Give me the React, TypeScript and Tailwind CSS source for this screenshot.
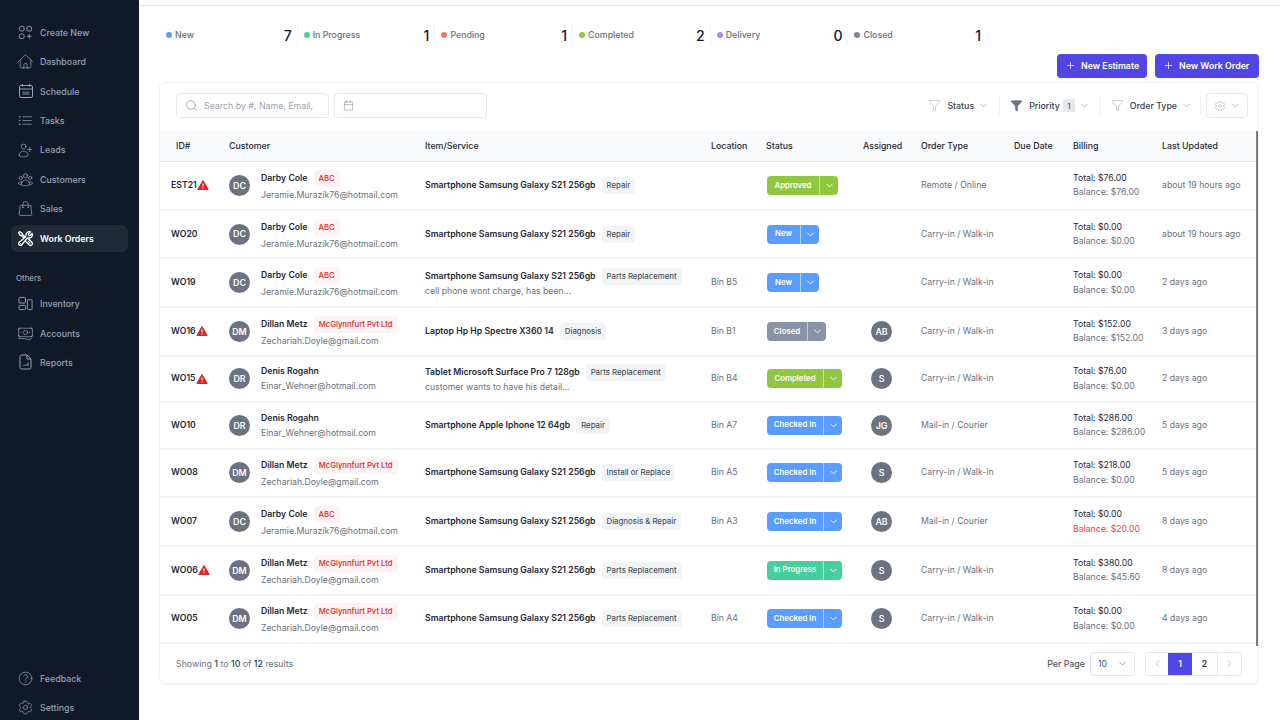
import { ChevronDown, ChevronLeft, ChevronRight, Plus, Search, Calendar, Filter, Settings } from "lucide-react";
import {
  HiOutlineHome,
  HiOutlineListBullet,
  HiOutlineUserPlus,
  HiOutlineUserGroup,
  HiOutlineShoppingBag,
  HiOutlineWrenchScrewdriver,
  HiOutlineBanknotes,
  HiOutlineQuestionMarkCircle,
  HiOutlineCog6Tooth,
} from "react-icons/hi2";
import type { ReactNode } from "react";

type Row = {
  id: string;
  alert?: boolean;
  initials: string;
  name: string;
  org?: string;
  email: string;
  item: string;
  tag: string;
  note?: string;
  location?: string;
  status: string;
  assigned?: string;
  orderType: string;
  total: string;
  balance: string;
  balanceRed?: boolean;
  updated: string;
};

const rows: Row[] = [
  { id: "EST21", alert: true, initials: "DC", name: "Darby Cole", org: "ABC", email: "Jeramie.Murazik76@hotmail.com", item: "Smartphone Samsung Galaxy S21 256gb", tag: "Repair", status: "Approved", orderType: "Remote / Online", total: "$76.00", balance: "$76.00", updated: "about 19 hours ago" },
  { id: "WO20", initials: "DC", name: "Darby Cole", org: "ABC", email: "Jeramie.Murazik76@hotmail.com", item: "Smartphone Samsung Galaxy S21 256gb", tag: "Repair", status: "New", orderType: "Carry-in / Walk-in", total: "$0.00", balance: "$0.00", updated: "about 19 hours ago" },
  { id: "WO19", initials: "DC", name: "Darby Cole", org: "ABC", email: "Jeramie.Murazik76@hotmail.com", item: "Smartphone Samsung Galaxy S21 256gb", tag: "Parts Replacement", note: "cell phone wont charge, has been...", location: "Bin B5", status: "New", orderType: "Carry-in / Walk-in", total: "$0.00", balance: "$0.00", updated: "2 days ago" },
  { id: "WO16", alert: true, initials: "DM", name: "Dillan Metz", org: "McGlynnfurt Pvt Ltd", email: "Zechariah.Doyle@gmail.com", item: "Laptop Hp Hp Spectre X360 14", tag: "Diagnosis", location: "Bin B1", status: "Closed", assigned: "AB", orderType: "Carry-in / Walk-in", total: "$152.00", balance: "$152.00", updated: "3 days ago" },
  { id: "WO15", alert: true, initials: "DR", name: "Denis Rogahn", email: "Einar_Wehner@hotmail.com", item: "Tablet Microsoft Surface Pro 7 128gb", tag: "Parts Replacement", note: "customer wants to have his detail...", location: "Bin B4", status: "Completed", assigned: "S", orderType: "Carry-in / Walk-in", total: "$76.00", balance: "$0.00", updated: "2 days ago" },
  { id: "WO10", initials: "DR", name: "Denis Rogahn", email: "Einar_Wehner@hotmail.com", item: "Smartphone Apple Iphone 12 64gb", tag: "Repair", location: "Bin A7", status: "Checked In", assigned: "JG", orderType: "Mail-in / Courier", total: "$286.00", balance: "$286.00", updated: "5 days ago" },
  { id: "WO08", initials: "DM", name: "Dillan Metz", org: "McGlynnfurt Pvt Ltd", email: "Zechariah.Doyle@gmail.com", item: "Smartphone Samsung Galaxy S21 256gb", tag: "Install or Replace", location: "Bin A5", status: "Checked In", assigned: "S", orderType: "Carry-in / Walk-in", total: "$218.00", balance: "$0.00", updated: "5 days ago" },
  { id: "WO07", initials: "DC", name: "Darby Cole", org: "ABC", email: "Jeramie.Murazik76@hotmail.com", item: "Smartphone Samsung Galaxy S21 256gb", tag: "Diagnosis & Repair", location: "Bin A3", status: "Checked In", assigned: "AB", orderType: "Mail-in / Courier", total: "$0.00", balance: "$20.00", balanceRed: true, updated: "8 days ago" },
  { id: "WO06", alert: true, initials: "DM", name: "Dillan Metz", org: "McGlynnfurt Pvt Ltd", email: "Zechariah.Doyle@gmail.com", item: "Smartphone Samsung Galaxy S21 256gb", tag: "Parts Replacement", status: "In Progress", assigned: "S", orderType: "Carry-in / Walk-in", total: "$380.00", balance: "$45.60", updated: "8 days ago" },
  { id: "WO05", initials: "DM", name: "Dillan Metz", org: "McGlynnfurt Pvt Ltd", email: "Zechariah.Doyle@gmail.com", item: "Smartphone Samsung Galaxy S21 256gb", tag: "Parts Replacement", location: "Bin A4", status: "Checked In", assigned: "S", orderType: "Carry-in / Walk-in", total: "$0.00", balance: "$0.00", updated: "4 days ago" },
];

const statusStyles: Record<string, { className: string; width: string }> = {
  Approved: { className: "bg-[#8fc740]", width: "w-[52px]" },
  New: { className: "bg-[#5b9dff]", width: "w-[33px]" },
  Closed: { className: "bg-[#8893a5]", width: "w-[40px]" },
  Completed: { className: "bg-[#8fc740]", width: "w-[56px]" },
  "Checked In": { className: "bg-[#5b9dff]", width: "w-[56px]" },
  "In Progress": { className: "bg-[#45cf9b]", width: "w-[56px]" },
};

const stats = [
  { label: "New", count: 7, dot: "bg-[#5b9dff]" },
  { label: "In Progress", count: 1, dot: "bg-[#45cf9b]" },
  { label: "Pending", count: 1, dot: "bg-[#f87060]" },
  { label: "Completed", count: 2, dot: "bg-[#8fc740]" },
  { label: "Delivery", count: 0, dot: "bg-[#a78bfa]" },
  { label: "Closed", count: 1, dot: "bg-[#7c8698]" },
];

const grid =
  "grid grid-cols-[69px_196px_286px_55px_97px_58px_93px_59px_89px_1fr] items-center";

function CreateIcon() {
  return (
    <svg viewBox="0 0 16 16" className="h-[15px] w-[15px]" fill="none" stroke="currentColor" strokeWidth="1">
      <rect x="1.500" y="1.500" width="5" height="5" rx="1.800" />
      <rect x="9.500" y="1.500" width="5" height="5" rx="1.800" />
      <rect x="1.500" y="9.500" width="5" height="5" rx="1.800" />
      <path d="M12 9.500v5M9.500 12h5" />
    </svg>
  );
}

function ScheduleIcon() {
  return (
    <svg viewBox="0 0 16 16" className="h-[16px] w-[16px]" fill="none" stroke="currentColor" strokeWidth="1">
      <rect x="1.500" y="2.500" width="13" height="12" rx="1.500" />
      <path d="M1.500 6h13M4.500 1v2.500M11.500 1v2.500" />
      <rect x="4.500" y="8.500" width="7" height="3.500" fill="currentColor" fillOpacity="0.45" stroke="none" />
    </svg>
  );
}

function InventoryIcon() {
  return (
    <svg viewBox="0 0 16 16" className="h-[15px] w-[15px]" fill="none" stroke="currentColor" strokeWidth="1">
      <rect x="1" y="1.500" width="7" height="6" rx="1" />
      <rect x="1" y="10" width="7" height="4.500" rx="1" />
      <rect x="10" y="4" width="5" height="10.500" rx="1" />
    </svg>
  );
}

function ReportsIcon() {
  return (
    <svg viewBox="0 0 16 16" className="h-[16px] w-[16px]" fill="none" stroke="currentColor" strokeWidth="1">
      <path d="M3.500 1h5.500l4 4v8.500a1.500 1.500 0 0 1-1.500 1.500h-8A1.500 1.500 0 0 1 2 13.500v-11A1.500 1.500 0 0 1 3.500 1Z" />
      <path d="M9 1v4h4M6 12v-1M8 12v-2M10 12V8.500" />
    </svg>
  );
}

function AlertIcon() {
  return (
    <svg viewBox="0 0 24 24" className="h-[12px] w-[12px] shrink-0">
      <path d="M12 3 22.500 21H1.500Z" fill="#dc2626" stroke="#dc2626" strokeWidth="2" strokeLinejoin="round" />
      <path d="M12 9v6M12 17.200v1.600" stroke="#fff" strokeWidth="2.200" />
    </svg>
  );
}

function NavItem({ icon, label, active }: { icon: ReactNode; label: string; active?: boolean }) {
  return (
    <div
      className={`flex h-[27px] items-center gap-[6px] rounded-md pl-[6px] text-[8.8px] font-medium ${
        active ? "bg-[#1f2937] font-semibold text-white" : "text-[#94a3b8]"
      }`}
    >
      <span className="flex w-[17px] justify-center">{icon}</span>
      {label}
    </div>
  );
}

function Sidebar() {
  const iconClass = "h-[17px] w-[17px]";
  return (
    <aside className="flex h-[721px] w-[139px] shrink-0 flex-col justify-between bg-[#111827] pl-[11px] pr-[11px] pt-[19px]">
      <div className="flex flex-col gap-[2.4px]">
        <NavItem icon={<CreateIcon />} label="Create New" />
        <NavItem icon={<HiOutlineHome className={iconClass} strokeWidth={1} />} label="Dashboard" />
        <NavItem icon={<ScheduleIcon />} label="Schedule" />
        <NavItem icon={<HiOutlineListBullet className={iconClass} strokeWidth={1} />} label="Tasks" />
        <NavItem icon={<HiOutlineUserPlus className={iconClass} strokeWidth={1} />} label="Leads" />
        <NavItem icon={<HiOutlineUserGroup className={iconClass} strokeWidth={1} />} label="Customers" />
        <NavItem icon={<HiOutlineShoppingBag className={iconClass} strokeWidth={1} />} label="Sales" />
        <NavItem icon={<HiOutlineWrenchScrewdriver className={iconClass} strokeWidth={1.8} />} label="Work Orders" active />
        <div className="mb-[3px] mt-[19px] pl-[5px] text-[7.8px] font-medium text-[#94a3b8]">Others</div>
        <NavItem icon={<InventoryIcon />} label="Inventory" />
        <NavItem icon={<HiOutlineBanknotes className={iconClass} strokeWidth={1} />} label="Accounts" />
        <NavItem icon={<ReportsIcon />} label="Reports" />
      </div>
      <div className="flex flex-col gap-[2.4px]">
        <NavItem icon={<HiOutlineQuestionMarkCircle className={iconClass} strokeWidth={1} />} label="Feedback" />
        <NavItem icon={<HiOutlineCog6Tooth className={iconClass} strokeWidth={1} />} label="Settings" />
      </div>
    </aside>
  );
}

function StatusButton({ status }: { status: string }) {
  const style = statusStyles[status];
  return (
    <div className={`ml-[1px] flex h-[19px] w-fit items-center rounded-[4px] text-white ${style.className}`}>
      <span className={`text-center text-[7.8px] font-semibold ${style.width}`}>{status}</span>
      <span className="flex h-full w-[19px] items-center justify-center border-l border-white/50">
        <ChevronDown className="h-[11px] w-[11px]" />
      </span>
    </div>
  );
}

function Avatar({ text }: { text: string }) {
  return (
    <span className="flex h-[21px] w-[21px] shrink-0 items-center justify-center rounded-full bg-[#6b7280] text-[8.8px] font-semibold text-white">
      {text}
    </span>
  );
}

function FilterButton({ label, count, filled }: { label: string; count?: number; filled?: boolean }) {
  return (
    <div className="flex items-center text-[8.8px] font-medium text-[#374151]">
      <Filter className={`h-[13px] w-[13px] ${filled ? "fill-[#6b7280] text-[#6b7280]" : "text-[#9ca3af]"}`} strokeWidth={1} />
      <span className="ml-[6px]">{label}</span>
      {count ? (
        <span className="ml-[3px] flex h-[13px] w-[12px] items-center justify-center rounded-[2px] bg-[#e5e7eb] text-[8px] text-[#4b5563]">
          {count}
        </span>
      ) : null}
      <ChevronDown className="ml-[4px] h-[11px] w-[11px] text-[#9ca3af]" strokeWidth={1.5} />
    </div>
  );
}

function TableRow({ row }: { row: Row }) {
  return (
    <div className={`${grid} border-b-2 border-[#f3f4f6] ${row.org ? "h-[48.7px]" : "h-[46.4px]"}`}>
      <div className="flex items-center pl-[11px] text-[8.7px] font-semibold text-[#1f2937]">
        {row.id}
        {row.alert ? <AlertIcon /> : null}
      </div>
      <div className="flex items-center gap-[11px]">
        <Avatar text={row.initials} />
        <div className="min-w-0 pt-[1px]">
          <div className="flex items-center gap-[6px]">
            <span className="text-[8.7px] font-semibold leading-[13px] text-[#1f2937]">{row.name}</span>
            {row.org ? (
              <span className="rounded-[4px] bg-[#fef2f2] px-[5px] py-[3px] text-[7.7px] font-medium leading-[11px] text-[#dc2626]">
                {row.org}
              </span>
            ) : null}
          </div>
          <div className="mt-[2px] text-[8.7px] leading-[13px] text-[#6b7280]">{row.email}</div>
        </div>
      </div>
      <div>
        <div className="flex items-center gap-[6px]">
          <span className="text-[8.7px] font-semibold text-[#1f2937]">{row.item}</span>
          <span className="rounded-[4px] bg-[#f3f4f6] px-[5px] py-[3px] text-[7.8px] font-medium leading-[11px] text-[#4b5563]">
            {row.tag}
          </span>
        </div>
        {row.note ? <div className="text-[8.7px] leading-[12px] text-[#6b7280]">{row.note}</div> : null}
      </div>
      <div className="text-[8.7px] text-[#6b7280]">{row.location}</div>
      <StatusButton status={row.status} />
      <div className="pl-[8px]">{row.assigned ? <Avatar text={row.assigned} /> : null}</div>
      <div className="text-[8.7px] text-[#6b7280]">{row.orderType}</div>
      <div />
      <div className="text-[8.7px] leading-[14.5px]">
        <div className="text-[#1f2937]">Total: {row.total}</div>
        <div className={row.balanceRed ? "text-[#ef4444]" : "text-[#6b7280]"}>Balance: {row.balance}</div>
      </div>
      <div className="whitespace-nowrap text-[8.7px] text-[#6b7280]">{row.updated}</div>
    </div>
  );
}

export default function App() {
  return (
    <div className="flex h-[720px] w-[1280px] overflow-hidden bg-white font-['Inter',sans-serif]">
      <Sidebar />
      <main className="flex min-w-0 flex-1 flex-col">
        <div className="h-[6px] border-b border-[#e5e7eb]" />
        <div className="flex pl-[21px] pt-[18px]">
          {stats.map((stat, index) => (
            <div
              key={stat.label}
              className={`flex h-[22px] w-[137.7px] items-center justify-between pl-[6px] pr-[5px] ${index < 5 ? "border-r border-[#f3f4f6]" : ""}`}
            >
              <span className="flex items-center gap-[3px] text-[8.8px] font-medium text-[#6b7280]">
                <span className={`h-[6px] w-[6px] rounded-full ${stat.dot}`} />
                {stat.label}
              </span>
              <span className="text-[14px] font-medium text-[#111827]">{stat.count}</span>
            </div>
          ))}
        </div>
        <div className="mr-[21px] mt-[7.5px] flex justify-end gap-[8px]">
          <button type="button" className="flex h-[24px] w-[90px] items-center gap-[5px] rounded-[4px] bg-[#4f46e5] pl-[8px] text-[8.8px] font-semibold text-white">
            <Plus className="h-[11px] w-[11px]" strokeWidth={1.5} />
            New Estimate
          </button>
          <button type="button" className="flex h-[24px] w-[104px] items-center gap-[5px] rounded-[4px] bg-[#4f46e5] pl-[8px] text-[8.8px] font-semibold text-white">
            <Plus className="h-[11px] w-[11px]" strokeWidth={1.5} />
            New Work Order
          </button>
        </div>
        <section className="relative ml-[20px] mr-[21px] mt-[4.5px] h-[602px] overflow-hidden rounded-[6px] border border-[#f0f1f3] shadow-[0_1px_2px_rgba(0,0,0,0.05)]">
          <div className="flex h-[47px] items-center justify-between pb-[2px] pl-[16px] pr-[10px]">
            <div className="flex gap-[5px]">
              <div className="flex h-[25px] w-[153px] items-center gap-[6px] rounded-[4px] border border-[#e5e7eb] pl-[8px]">
                <Search className="h-[13px] w-[13px] shrink-0 text-[#6b7280]" strokeWidth={1} />
                <input
                  readOnly
                  placeholder="Search by #, Name, Email, Order"
                  className="w-[111px] text-[8.8px] outline-none placeholder:text-[#9ca3af]"
                />
              </div>
              <div className="flex h-[25px] w-[153px] items-center rounded-[4px] border border-[#e5e7eb] pl-[8px]">
                <Calendar className="h-[11px] w-[11px] text-[#6b7280]" strokeWidth={1} />
              </div>
            </div>
            <div className="flex items-center">
              <FilterButton label="Status" />
              <span className="mx-[10px] h-[19px] w-px bg-[#f0f1f3]" />
              <FilterButton label="Priority" count={1} filled />
              <span className="mx-[10px] h-[19px] w-px bg-[#f0f1f3]" />
              <FilterButton label="Order Type" />
              <span className="ml-[8px] mr-[5px] h-[19px] w-px bg-[#f0f1f3]" />
              <div className="flex h-[25px] w-[42px] items-center justify-center gap-[4px] rounded-[4px] border border-[#e5e7eb] text-[#9ca3af]">
                <Settings className="h-[12px] w-[12px]" strokeWidth={1} />
                <ChevronDown className="h-[11px] w-[11px]" strokeWidth={1.5} />
              </div>
            </div>
          </div>
          <div className={`${grid} h-[32px] border-b border-[#e5e7eb] bg-[#f9fafb] pt-[1px] text-[8.8px] font-medium text-[#1f2937]`}>
            <div className="pl-[16px]">ID#</div>
            <div>Customer</div>
            <div>Item/Service</div>
            <div>Location</div>
            <div>Status</div>
            <div>Assigned</div>
            <div>Order Type</div>
            <div>Due Date</div>
            <div>Billing</div>
            <div>Last Updated</div>
          </div>
          {rows.map((row) => (
            <TableRow key={row.id} row={row} />
          ))}
          <div className="flex h-[39px] items-center justify-between pl-[16px] pr-[16px]">
            <div className="text-[8.8px] text-[#6b7280]">
              Showing <span className="font-medium text-[#374151]">1</span> to <span className="font-medium text-[#374151]">10</span> of <span className="font-medium text-[#374151]">12</span> results
            </div>
            <div className="flex items-center">
              <span className="mr-[5px] text-[8.8px] font-medium text-[#4b5563]">Per Page</span>
              <div className="flex h-[24px] w-[45px] items-center justify-between rounded-[4px] border border-[#e5e7eb] pl-[7px] pr-[6px] text-[8.8px] text-[#4b5563]">
                10
                <ChevronDown className="h-[11px] w-[11px] text-[#6b7280]" strokeWidth={1.5} />
              </div>
              <div className="ml-[10px] flex h-[24px] items-center overflow-hidden rounded-[4px] border border-[#e5e7eb] text-[8.8px] font-semibold">
                <span className="flex h-full w-[22px] items-center justify-center text-[#9ca3af]">
                  <ChevronLeft className="h-[11px] w-[11px]" strokeWidth={1.5} />
                </span>
                <span className="flex h-full w-[24px] items-center justify-center bg-[#4f46e5] text-white">1</span>
                <span className="flex h-full w-[26px] items-center justify-center border-r border-[#e5e7eb] text-[#374151]">2</span>
                <span className="flex h-full w-[23px] items-center justify-center text-[#9ca3af]">
                  <ChevronRight className="h-[11px] w-[11px]" strokeWidth={1.5} />
                </span>
              </div>
            </div>
          </div>
          <div className="absolute right-0 top-[48px] h-[515px] w-[2px] bg-[#7c7c7c]" />
        </section>
      </main>
    </div>
  );
}
